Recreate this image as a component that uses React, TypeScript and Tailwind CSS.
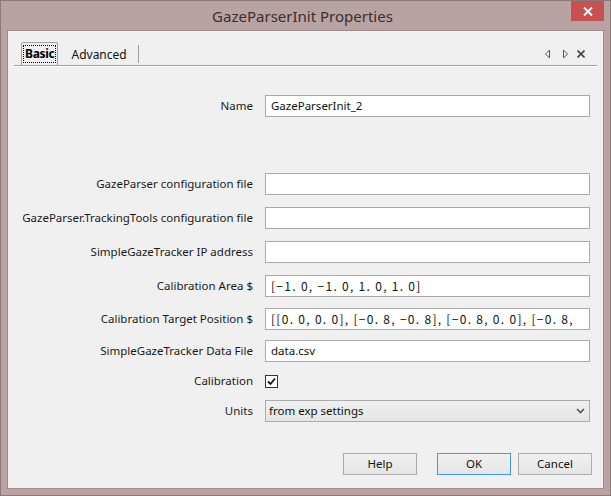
import React from "react";

const font = { fontFamily: '"Noto Sans", "Liberation Sans", sans-serif' };

const Row = ({
  label,
  className,
  children,
}: {
  label: string;
  className?: string;
  children: React.ReactNode;
}) => (
  <div className={`flex h-[22px] items-center ${className ?? ""}`}>
    <div className="w-[245px] shrink-0 whitespace-nowrap text-right text-[11.5px] text-[#1a1a1a]">
      {label}
    </div>
    <div className="ml-[12px] w-[325px]">{children}</div>
  </div>
);

const TextBox = ({ value, mono }: { value?: string; mono?: boolean }) => (
  <div
    className={`flex h-[22px] items-center overflow-hidden whitespace-nowrap border border-[#ababab] bg-white px-[5px] text-[11.5px] text-[#111] ${
      mono ? "font-['Noto_Sans_CJK_JP',monospace] text-[12px] tracking-[1.3px]" : ""
    }`}
  >
    {value}
  </div>
);

const Button = ({ label, primary }: { label: string; primary?: boolean }) => (
  <div
    className={`flex h-[22px] w-[74px] items-center justify-center border bg-gradient-to-b from-[#f0f0f0] to-[#e5e5e5] text-[11.5px] text-[#111] ${
      primary ? "border-[#3c9bf0]" : "border-[#acacac]"
    }`}
  >
    {label}
  </div>
);

export default function App() {
  return (
    <div
      className="flex h-[496px] w-[611px] flex-col border border-[#8c7877] bg-[#b9a3a2]"
      style={font}
    >
      {/* タイトルバー */}
      <div className="flex h-[29px] shrink-0 items-start">
        <div className="flex h-[30px] flex-1 items-center justify-center pl-[33px] text-[15px] text-[#363030]">
          GazeParserInit Properties
        </div>
        <div className="mr-[6px] flex h-[20px] w-[33px] items-center justify-center bg-[#c75050] text-white">
          <svg width="10" height="9" viewBox="0 0 10 9">
            <path d="M1 0.5 L9 8.5 M9 0.5 L1 8.5" stroke="white" strokeWidth="2" />
          </svg>
        </div>
      </div>

      {/* クライアント領域 */}
      <div className="mx-[6px] mb-[6px] flex flex-1 flex-col border border-[#9d8c8b] bg-[#f0f0f0]">
        {/* タブ */}
        <div className="mx-[6px] mt-[12px]">
          <div className="flex h-[23px] items-end border-b border-[#a0a0a0]">
            <div className="ml-[7px] flex h-[23px] items-center rounded-t-[2px] border border-b-0 border-[#a0a0a0] bg-[#f0f0f0] px-[1px]">
              <span className="border border-dotted border-black px-[1px] text-[12px] font-bold leading-[16px] tracking-[-0.3px] text-black">
                Basic
              </span>
            </div>
            <div className="flex h-[20px] items-center pl-[13px] pr-[11px] text-[12px] text-[#111]">
              Advanced
            </div>
            <div className="mb-[2px] h-[18px] w-px bg-[#a0a0a0]" />
            <div className="flex-1" />
            <div className="mb-[6px] mr-[12px] flex items-center">
              <svg width="7" height="10" viewBox="0 0 7 10">
                <path d="M5.5 1 L1.5 5 L5.5 9 Z" fill="none" stroke="#555" />
              </svg>
              <svg className="ml-[11px]" width="7" height="10" viewBox="0 0 7 10">
                <path d="M1.5 1 L5.5 5 L1.5 9 Z" fill="none" stroke="#555" />
              </svg>
              <svg className="ml-[8px]" width="8" height="8" viewBox="0 0 8 8">
                <path d="M0.5 0.5 L7.5 7.5 M7.5 0.5 L0.5 7.5" stroke="#444" strokeWidth="1.6" />
              </svg>
            </div>
          </div>
          <div className="h-px bg-white" />
        </div>

        {/* フォーム */}
        <div className="flex flex-col">
          <Row label="Name" className="mt-[28px]">
            <TextBox value="GazeParserInit_2" />
          </Row>
          <Row label="GazeParser configuration file" className="mt-[56px]">
            <TextBox />
          </Row>
          <Row label="GazeParser.TrackingTools configuration file" className="mt-[12px]">
            <TextBox />
          </Row>
          <Row label="SimpleGazeTracker IP address" className="mt-[12px]">
            <TextBox />
          </Row>
          <Row label="Calibration Area $" className="mt-[12px]">
            <TextBox value="[−1. 0, −1. 0, 1. 0, 1. 0]" mono />
          </Row>
          <Row label="Calibration Target Position $" className="mt-[11px]">
            <TextBox value="[[0. 0, 0. 0], [−0. 8, −0. 8], [−0. 8, 0. 0], [−0. 8," mono />
          </Row>
          <Row label="SimpleGazeTracker Data File" className="mt-[10px]">
            <TextBox value="data.csv" />
          </Row>
          <Row label="Calibration" className="mt-[8px]">
            <div className="flex h-[13px] w-[13px] items-center justify-center border border-[#333] bg-white">
              <svg width="9" height="9" viewBox="0 0 9 9">
                <path d="M1 4.5 L3.5 7 L8 1.5" fill="none" stroke="#111" strokeWidth="1.8" />
              </svg>
            </div>
          </Row>
          <Row label="Units" className="mt-[8px]">
            <div className="flex h-[22px] items-center justify-between border border-[#acacac] bg-gradient-to-b from-[#f0f0f0] to-[#e5e5e5] pl-[3px] pr-[4px] text-[11.5px] text-[#111]">
              <span>from exp settings</span>
              <svg width="9" height="6" viewBox="0 0 9 6">
                <path d="M1 1 L4.5 4.5 L8 1" fill="none" stroke="#555" strokeWidth="1.6" />
              </svg>
            </div>
          </Row>
        </div>

        {/* ボタン */}
        <div className="mr-[11px] mt-[31px] flex justify-end">
          <Button label="Help" />
          <div className="ml-[20px]">
            <Button label="OK" primary />
          </div>
          <div className="ml-[7px]">
            <Button label="Cancel" />
          </div>
        </div>
      </div>
    </div>
  );
}
